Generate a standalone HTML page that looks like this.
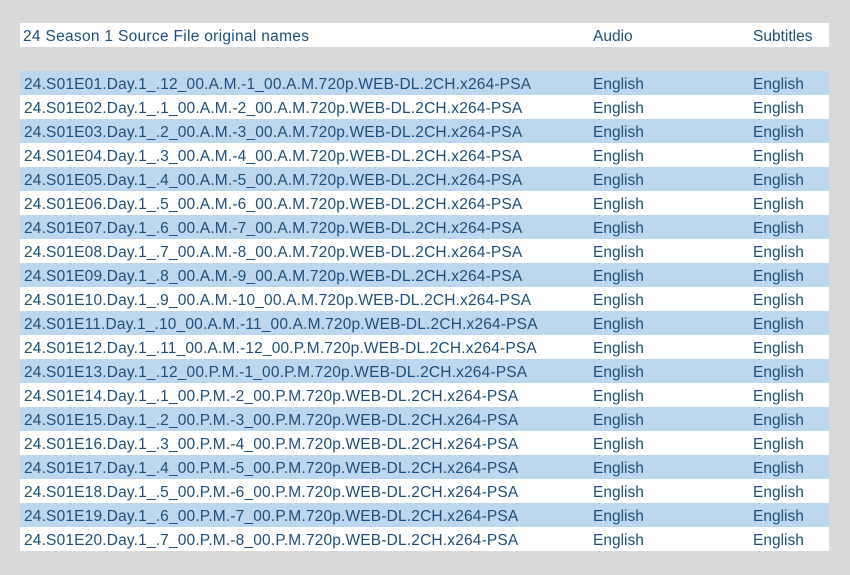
<!DOCTYPE html>
<html><head><meta charset="utf-8"><style>
html,body{margin:0;padding:0;width:850px;height:575px;background:#d9d9d9;overflow:hidden}
.p{position:absolute;left:20px;width:809px;font-family:"Liberation Sans",Calibri,sans-serif;font-size:15.5px;color:#1f4e79}
.r{position:absolute;left:0;width:809px;height:24px;line-height:28px;white-space:nowrap}
.r span{position:absolute;top:0}
.a{left:4px;letter-spacing:0.17px}.b{left:573px}.c{left:733px}
.w{background:#fff}.bl{background:#bdd7ee}
</style></head><body>
<div class="p">
<div class="r w" style="top:23px"><span class="a" style="left:3px;letter-spacing:0.3px">24 Season 1 Source File original names</span><span class="b">Audio</span><span class="c">Subtitles</span></div>
</div>
<div class="p">
<div class="r bl" style="top:71px"><span class="a">24.S01E01.Day.1_.12_00.A.M.-1_00.A.M.720p.WEB-DL.2CH.x264-PSA</span><span class="b">English</span><span class="c">English</span></div>
<div class="r w" style="top:95px"><span class="a">24.S01E02.Day.1_.1_00.A.M.-2_00.A.M.720p.WEB-DL.2CH.x264-PSA</span><span class="b">English</span><span class="c">English</span></div>
<div class="r bl" style="top:119px"><span class="a">24.S01E03.Day.1_.2_00.A.M.-3_00.A.M.720p.WEB-DL.2CH.x264-PSA</span><span class="b">English</span><span class="c">English</span></div>
<div class="r w" style="top:143px"><span class="a">24.S01E04.Day.1_.3_00.A.M.-4_00.A.M.720p.WEB-DL.2CH.x264-PSA</span><span class="b">English</span><span class="c">English</span></div>
<div class="r bl" style="top:167px"><span class="a">24.S01E05.Day.1_.4_00.A.M.-5_00.A.M.720p.WEB-DL.2CH.x264-PSA</span><span class="b">English</span><span class="c">English</span></div>
<div class="r w" style="top:191px"><span class="a">24.S01E06.Day.1_.5_00.A.M.-6_00.A.M.720p.WEB-DL.2CH.x264-PSA</span><span class="b">English</span><span class="c">English</span></div>
<div class="r bl" style="top:215px"><span class="a">24.S01E07.Day.1_.6_00.A.M.-7_00.A.M.720p.WEB-DL.2CH.x264-PSA</span><span class="b">English</span><span class="c">English</span></div>
<div class="r w" style="top:239px"><span class="a">24.S01E08.Day.1_.7_00.A.M.-8_00.A.M.720p.WEB-DL.2CH.x264-PSA</span><span class="b">English</span><span class="c">English</span></div>
<div class="r bl" style="top:263px"><span class="a">24.S01E09.Day.1_.8_00.A.M.-9_00.A.M.720p.WEB-DL.2CH.x264-PSA</span><span class="b">English</span><span class="c">English</span></div>
<div class="r w" style="top:287px"><span class="a">24.S01E10.Day.1_.9_00.A.M.-10_00.A.M.720p.WEB-DL.2CH.x264-PSA</span><span class="b">English</span><span class="c">English</span></div>
<div class="r bl" style="top:311px"><span class="a">24.S01E11.Day.1_.10_00.A.M.-11_00.A.M.720p.WEB-DL.2CH.x264-PSA</span><span class="b">English</span><span class="c">English</span></div>
<div class="r w" style="top:335px"><span class="a">24.S01E12.Day.1_.11_00.A.M.-12_00.P.M.720p.WEB-DL.2CH.x264-PSA</span><span class="b">English</span><span class="c">English</span></div>
<div class="r bl" style="top:359px"><span class="a">24.S01E13.Day.1_.12_00.P.M.-1_00.P.M.720p.WEB-DL.2CH.x264-PSA</span><span class="b">English</span><span class="c">English</span></div>
<div class="r w" style="top:383px"><span class="a">24.S01E14.Day.1_.1_00.P.M.-2_00.P.M.720p.WEB-DL.2CH.x264-PSA</span><span class="b">English</span><span class="c">English</span></div>
<div class="r bl" style="top:407px"><span class="a">24.S01E15.Day.1_.2_00.P.M.-3_00.P.M.720p.WEB-DL.2CH.x264-PSA</span><span class="b">English</span><span class="c">English</span></div>
<div class="r w" style="top:431px"><span class="a">24.S01E16.Day.1_.3_00.P.M.-4_00.P.M.720p.WEB-DL.2CH.x264-PSA</span><span class="b">English</span><span class="c">English</span></div>
<div class="r bl" style="top:455px"><span class="a">24.S01E17.Day.1_.4_00.P.M.-5_00.P.M.720p.WEB-DL.2CH.x264-PSA</span><span class="b">English</span><span class="c">English</span></div>
<div class="r w" style="top:479px"><span class="a">24.S01E18.Day.1_.5_00.P.M.-6_00.P.M.720p.WEB-DL.2CH.x264-PSA</span><span class="b">English</span><span class="c">English</span></div>
<div class="r bl" style="top:503px"><span class="a">24.S01E19.Day.1_.6_00.P.M.-7_00.P.M.720p.WEB-DL.2CH.x264-PSA</span><span class="b">English</span><span class="c">English</span></div>
<div class="r w" style="top:527px"><span class="a">24.S01E20.Day.1_.7_00.P.M.-8_00.P.M.720p.WEB-DL.2CH.x264-PSA</span><span class="b">English</span><span class="c">English</span></div>
</div>
</body></html>
